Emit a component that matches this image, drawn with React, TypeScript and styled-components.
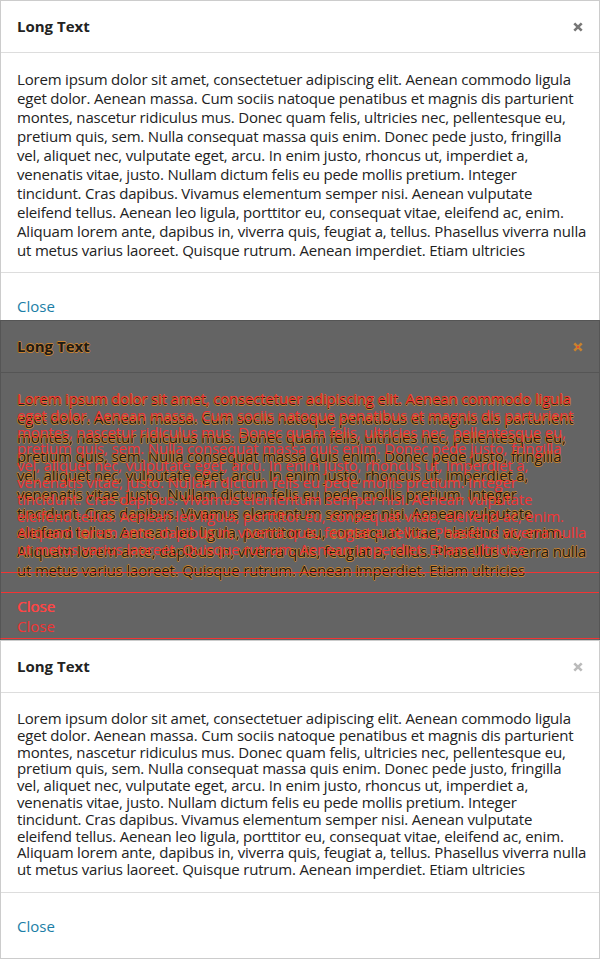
import React from 'react';
import styled, { createGlobalStyle, css } from 'styled-components';

type Variant = 'plain' | 'ghost' | 'diff';

const LINES = [
  'Lorem ipsum dolor sit amet, consectetuer adipiscing elit. Aenean commodo ligula',
  'eget dolor. Aenean massa. Cum sociis natoque penatibus et magnis dis parturient',
  'montes, nascetur ridiculus mus. Donec quam felis, ultricies nec, pellentesque eu,',
  'pretium quis, sem. Nulla consequat massa quis enim. Donec pede justo, fringilla',
  'vel, aliquet nec, vulputate eget, arcu. In enim justo, rhoncus ut, imperdiet a,',
  'venenatis vitae, justo. Nullam dictum felis eu pede mollis pretium. Integer',
  'tincidunt. Cras dapibus. Vivamus elementum semper nisi. Aenean vulputate',
  'eleifend tellus. Aenean leo ligula, porttitor eu, consequat vitae, eleifend ac, enim.',
  'Aliquam lorem ante, dapibus in, viverra quis, feugiat a, tellus. Phasellus viverra nulla',
  'ut metus varius laoreet. Quisque rutrum. Aenean imperdiet. Etiam ultricies',
];

const RED = '#f23434';
const GHOST_SHADOW = css`
  color: #1d1a16;
  text-shadow: 0.7px 0 0 #c9822f, -0.7px 0 0 #c9822f, 0 0.7px 0 #c9822f, 0 -0.7px 0 #c9822f;
`;

const GlobalStyle = createGlobalStyle`
  html, body {
    margin: 0;
    padding: 0;
    background: #ffffff;
  }
  body {
    font-family: 'Open Sans', 'Noto Sans', sans-serif;
  }
`;

const Page = styled.div`
  width: 600px;
  height: 960px;
  display: flex;
  flex-direction: column;
`;

const Frame = styled.div`
  position: relative;
  height: 320px;
  overflow: hidden;
`;

const DiffFrame = styled(Frame)`
  background: #646464;
`;

const Layer = styled.div`
  position: absolute;
  inset: 0;
`;

interface IVariant {
  $variant: Variant;
}

const Modal = styled.div<IVariant>`
  box-sizing: border-box;
  width: 600px;
  display: flex;
  flex-direction: column;
  background: ${(p) => (p.$variant === 'plain' ? '#ffffff' : 'transparent')};
  border: 1px solid
    ${(p) => (p.$variant === 'plain' ? '#cccccc' : p.$variant === 'ghost' ? '#555555' : 'transparent')};
  ${(p) => p.$variant === 'diff' && css`border-bottom-color: ${RED};`}
`;

const Header = styled.div<IVariant>`
  height: 51px;
  padding: 0 16px;
  display: flex;
  align-items: center;
  justify-content: space-between;
  border-bottom: 1px solid
    ${(p) => (p.$variant === 'plain' ? '#dddddd' : p.$variant === 'ghost' ? '#555555' : 'transparent')};
  visibility: ${(p) => (p.$variant === 'diff' ? 'hidden' : 'visible')};
`;

const Title = styled.div<IVariant>`
  font-size: 15px;
  line-height: 20px;
  margin-top: -2px;
  font-weight: 700;
  color: #222222;
  ${(p) => p.$variant === 'ghost' && GHOST_SHADOW}
`;

const CloseIcon = styled.svg`
  width: 10px;
  height: 10px;
  display: block;
`;

interface IBody extends IVariant {
  $height: number;
  $lineHeight: number;
}

const Body = styled.div<IBody>`
  box-sizing: border-box;
  height: ${(p) => p.$height}px;
  padding: 17px 16px 0;
  overflow: hidden;
  font-size: 15px;
  letter-spacing: -0.18px;
  line-height: ${(p) => p.$lineHeight}px;
  color: ${(p) => (p.$variant === 'diff' ? RED : '#222222')};
  ${(p) => p.$variant === 'ghost' && GHOST_SHADOW}
  border-bottom: 1px solid
    ${(p) => (p.$variant === 'plain' ? '#dddddd' : RED)};
`;

const Line = styled.span`
  display: block;
  white-space: nowrap;
`;

const Footer = styled.div`
  height: 65px;
  padding: 22px 16px 0;
  box-sizing: border-box;
`;

const CloseLink = styled.a<IVariant>`
  font-size: 15px;
  line-height: 20px;
  text-decoration: none;
  cursor: pointer;
  color: ${(p) => (p.$variant === 'plain' ? '#1b7ea6' : RED)};
  ${(p) =>
    p.$variant === 'diff' &&
    css`
      color: #ff4545;
      text-shadow: 0.6px 0 0 #ff4545;
    `}
`;

interface ModalProps {
  variant: Variant;
  lineHeight: number;
  bodyHeight: number;
  iconColor: string;
}

const LongTextModal: React.FC<ModalProps> = ({ variant, lineHeight, bodyHeight, iconColor }) => (
  <Modal $variant={variant}>
    <Header $variant={variant}>
      <Title $variant={variant}>Long Text</Title>
      <CloseIcon viewBox="0 0 10 10">
        <path d="M1.3 1.3 L8.7 8.7 M8.7 1.3 L1.3 8.7" stroke={iconColor} strokeWidth={2.6} strokeLinecap="butt" />
        {variant === 'ghost' && <circle cx={5} cy={5} r={1} fill={RED} />}
      </CloseIcon>
    </Header>
    <Body $variant={variant} $height={bodyHeight} $lineHeight={lineHeight}>
      {LINES.map((l) => (
        <Line key={l}>{l}</Line>
      ))}
    </Body>
    <Footer>
      <CloseLink $variant={variant}>Close</CloseLink>
    </Footer>
  </Modal>
);

const App: React.FC = () => (
  <Page>
    <GlobalStyle />
    <Frame>
      <LongTextModal variant="plain" lineHeight={19} bodyHeight={220} iconColor="#777777" />
    </Frame>
    <DiffFrame>
      <Layer>
        <LongTextModal variant="ghost" lineHeight={19} bodyHeight={220} iconColor="#c9822f" />
      </Layer>
      <Layer>
        <LongTextModal variant="diff" lineHeight={16.8} bodyHeight={200} iconColor="transparent" />
      </Layer>
    </DiffFrame>
    <Frame>
      <LongTextModal variant="plain" lineHeight={16.8} bodyHeight={200} iconColor="#bbbbbb" />
    </Frame>
  </Page>
);

export default App;
